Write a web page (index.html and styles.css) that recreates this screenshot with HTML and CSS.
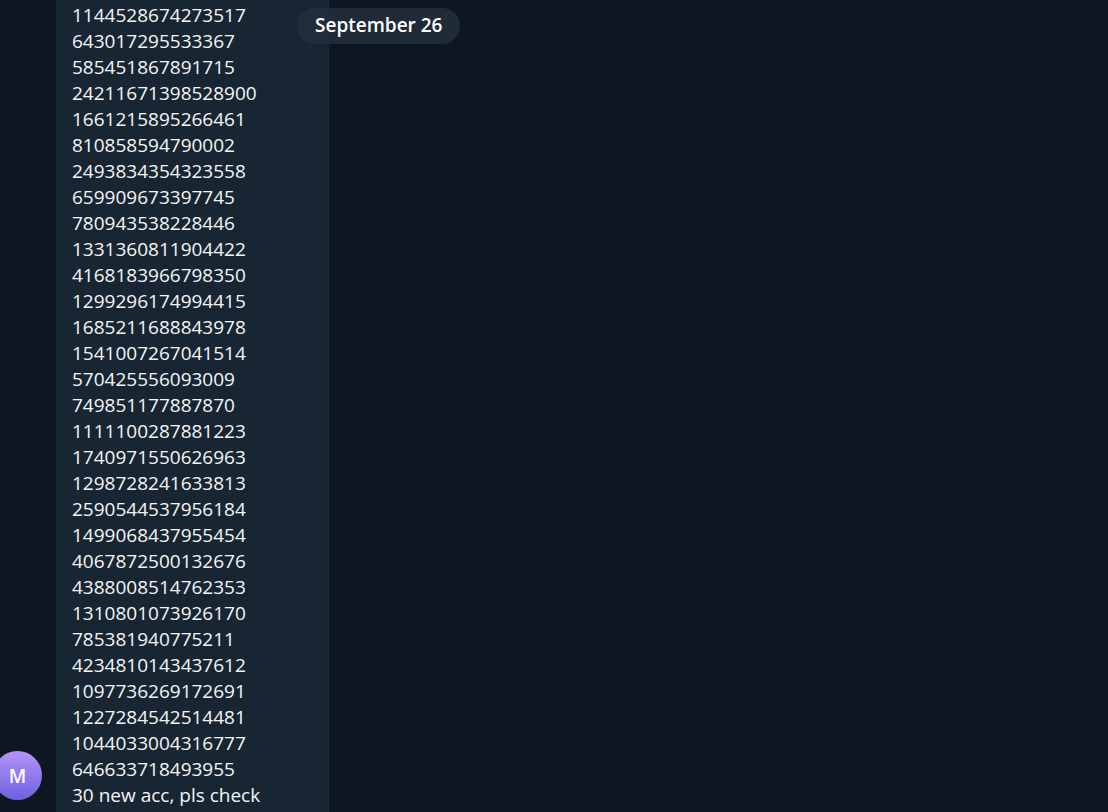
FILE: index.html
```
<!DOCTYPE html>
<html lang="en">
<head>
<meta charset="utf-8">
<title>Chat</title>
<link rel="stylesheet" href="styles.css">
</head>
<body>
<main class="chat">
  <time class="date-badge">September 26</time>
  <div class="avatar">M</div>
  <p class="bubble">1144528674273517
643017295533367
585451867891715
24211671398528900
1661215895266461
810858594790002
2493834354323558
659909673397745
780943538228446
1331360811904422
4168183966798350
1299296174994415
1685211688843978
1541007267041514
570425556093009
749851177887870
1111100287881223
1740971550626963
1298728241633813
2590544537956184
1499068437955454
4067872500132676
4388008514762353
1310801073926170
785381940775211
4234810143437612
1097736269172691
1227284542514481
1044033004316777
646633718493955
30 new acc, pls check</p>
</main>
</body>
</html>
```
FILE: styles.css
```
body {
  margin: 0;
  background: #0e1621;
  color: #f5f5f5;
  font-family: "Open Sans", sans-serif;
  font-size: 19px;
}

.chat {
  position: relative;
  display: flex;
  align-items: flex-end;
  gap: 14px;
  min-height: 100vh;
  overflow: hidden;
}

.avatar {
  display: flex;
  align-items: center;
  justify-content: center;
  flex: none;
  width: 49px;
  height: 49px;
  margin: 0 0 12px -7px;
  border-radius: 50%;
  background: linear-gradient(#b694f9, #6c61df);
  color: #fff;
  font-weight: 600;
}

.bubble {
  box-sizing: border-box;
  min-width: 273px;
  min-height: 100vh;
  margin: 0;
  padding: 2px 16px 4px;
  background: #182533;
  line-height: 26px;
  white-space: pre-line;
}

.date-badge {
  position: absolute;
  top: 8px;
  left: 297px;
  padding: 0 18px 2px;
  border-radius: 18px;
  background: rgba(33, 46, 60, 0.9);
  color: #fff;
  font-weight: 600;
  line-height: 34px;
}
```
